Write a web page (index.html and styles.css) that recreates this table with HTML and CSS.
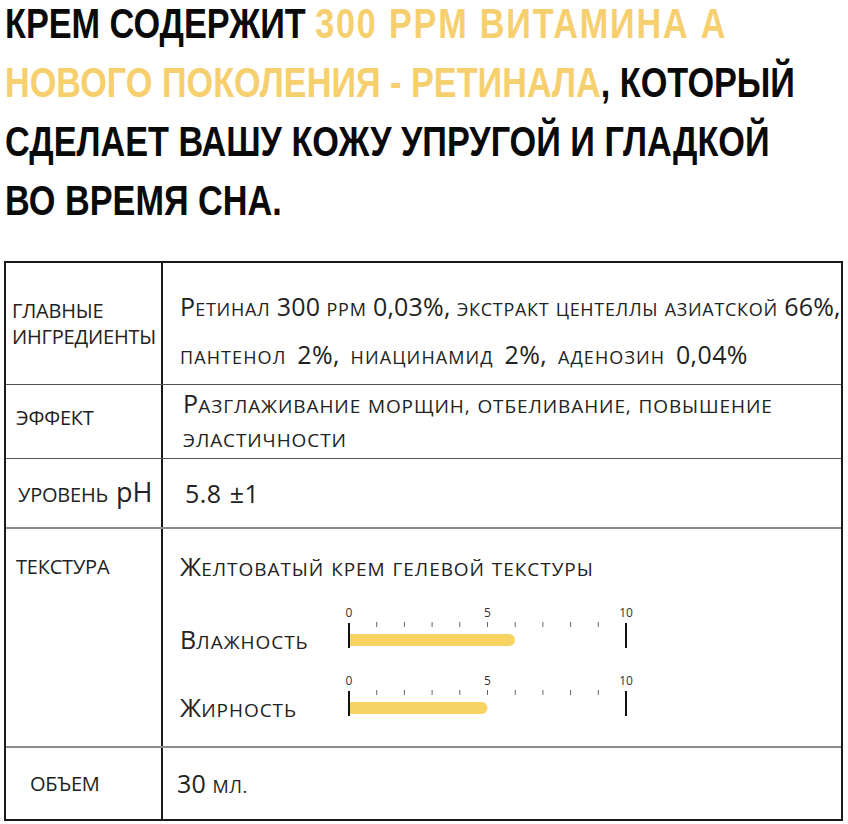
FILE: index.html
```html
<!DOCTYPE html>
<html lang="ru">
<head>
<meta charset="utf-8">
<title>Крем с ретиналом</title>
<link rel="stylesheet" href="styles.css">
</head>
<body>
<div class="head-wrap">
<h1 class="headline">
  <span class="dark">КРЕМ СОДЕРЖИТ </span><span class="accent wide">300 PPM ВИТАМИНА А</span><br>
  <span class="accent">НОВОГО ПОКОЛЕНИЯ - РЕТИНАЛА</span><span class="dark">, КОТОРЫЙ</span><br>
  <span class="dark">СДЕЛАЕТ ВАШУ КОЖУ УПРУГОЙ И ГЛАДКОЙ</span><br>
  <span class="dark">ВО ВРЕМЯ СНА.</span>
</h1>
</div>

<div class="spec">
  <div class="row row-ingr">
    <div class="label label-ingr"><span>ГЛАВНЫЕ<br>ИНГРЕДИЕНТЫ</span></div>
    <div class="value value-ingr"><span><b>Р</b>ЕТИНАЛ <b>300</b> PPM <b>0,03%,</b> ЭКСТРАКТ ЦЕНТЕЛЛЫ АЗИАТСКОЙ <b>66%,</b><br><span class="line2">ПАНТЕНОЛ <b>2%,</b> НИАЦИНАМИД <b>2%,</b> АДЕНОЗИН <b>0,04%</b></span></span></div>
  </div>
  <div class="row row-effect">
    <div class="label label-effect"><span>ЭФФЕКТ</span></div>
    <div class="value value-effect"><span><b>Р</b>АЗГЛАЖИВАНИЕ МОРЩИН, ОТБЕЛИВАНИЕ, ПОВЫШЕНИЕ<br>ЭЛАСТИЧНОСТИ</span></div>
  </div>
  <div class="row row-ph">
    <div class="label label-ph"><span>УРОВЕНЬ <span class="ph">pH</span></span></div>
    <div class="value value-ph"><span><b>5.8 ±1</b></span></div>
  </div>
  <div class="row row-texture">
    <div class="label label-texture"><span>ТЕКСТУРА</span></div>
    <div class="value value-texture">
      <div class="texture-text"><b>Ж</b>ЕЛТОВАТЫЙ КРЕМ ГЕЛЕВОЙ ТЕКСТУРЫ</div>
      <div class="gauge">
        <div class="gauge-name"><b>В</b>ЛАЖНОСТЬ</div>
        <svg class="scale" width="300" height="46" viewBox="0 0 300 46">
          <g class="nums"><text x="9" y="13">0</text><text x="147.5" y="13">5</text><text x="286" y="13">10</text></g>
          <g class="ticks">
            <line x1="36.7" y1="18" x2="36.7" y2="23"/><line x1="64.4" y1="18" x2="64.4" y2="23"/><line x1="92.1" y1="18" x2="92.1" y2="23"/><line x1="119.8" y1="18" x2="119.8" y2="23"/><line x1="147.5" y1="18" x2="147.5" y2="23"/><line x1="175.2" y1="18" x2="175.2" y2="23"/><line x1="202.9" y1="18" x2="202.9" y2="23"/><line x1="230.6" y1="18" x2="230.6" y2="23"/><line x1="258.3" y1="18" x2="258.3" y2="23"/>
          </g>
          <path class="bar" d="M9 30 H169 A6 6 0 0 1 169 42 H9 Z"/>
          <g class="ends"><line x1="9" y1="19" x2="9" y2="44"/><line x1="286" y1="19" x2="286" y2="44"/></g>
        </svg>
      </div>
      <div class="gauge">
        <div class="gauge-name"><b>Ж</b>ИРНОСТЬ</div>
        <svg class="scale" width="300" height="46" viewBox="0 0 300 46">
          <g class="nums"><text x="9" y="13">0</text><text x="147.5" y="13">5</text><text x="286" y="13">10</text></g>
          <g class="ticks">
            <line x1="36.7" y1="18" x2="36.7" y2="23"/><line x1="64.4" y1="18" x2="64.4" y2="23"/><line x1="92.1" y1="18" x2="92.1" y2="23"/><line x1="119.8" y1="18" x2="119.8" y2="23"/><line x1="147.5" y1="18" x2="147.5" y2="23"/><line x1="175.2" y1="18" x2="175.2" y2="23"/><line x1="202.9" y1="18" x2="202.9" y2="23"/><line x1="230.6" y1="18" x2="230.6" y2="23"/><line x1="258.3" y1="18" x2="258.3" y2="23"/>
          </g>
          <path class="bar" d="M9 30 H141.5 A6 6 0 0 1 141.5 42 H9 Z"/>
          <g class="ends"><line x1="9" y1="19" x2="9" y2="44"/><line x1="286" y1="19" x2="286" y2="44"/></g>
        </svg>
      </div>
    </div>
  </div>
  <div class="row row-volume">
    <div class="label label-volume"><span>ОБЪЕМ</span></div>
    <div class="value value-volume"><span><b>30</b> МЛ.</span></div>
  </div>
</div>
</body>
</html>
```

FILE: styles.css
```css
* { box-sizing: border-box; }
html, body { margin: 0; padding: 0; background: #fff; }
body { width: 848px; height: 824px; overflow: hidden; }

.head-wrap {
  height: 230px;
  overflow: hidden;
}
.headline {
  display: inline-block;
  margin: -6px 0 0 5px;
  padding: 0;
  font-family: "Liberation Sans", Arial, sans-serif;
  font-weight: 700;
  font-size: 42px;
  line-height: 59px;
  white-space: nowrap;
  transform: scaleX(0.815);
  transform-origin: 0 0;
}
.dark { color: #0a0a0a; }
.accent { color: #f6cf6e; }
.wide { letter-spacing: 2.2px; }

.spec {
  margin: 31px 0 0 4px;
  width: 839px;
  border: 2px solid #1a1a1a;
  font-family: "Open Sans", sans-serif;
  color: #222;
}
.row {
  display: grid;
  grid-template-columns: 157px 1fr;
}
.label {
  border-right: 2px solid #1a1a1a;
  display: flex;
  align-items: center;
  font-size: 20px;
  letter-spacing: -0.2px;
  line-height: 26px;
  color: #222;
}
.value {
  display: flex;
  align-items: center;
  font-size: 18px;
  letter-spacing: 0.7px;
  word-spacing: 1px;
  color: #222;
  white-space: nowrap;
}
.value b {
  font-weight: 400;
  font-size: 25px;
  letter-spacing: 0.2px;
}
.line2 { word-spacing: 5px; letter-spacing: 1.1px; }
.line2 b { letter-spacing: 0.4px; }

.row-ingr { height: 122px; border-bottom: 1px solid #555; }
.row-effect { height: 74px; border-bottom: 1px solid #555; }
.row-ph { height: 70px; border-bottom: 2px solid #8c8c8c; }
.row-texture { height: 219px; border-bottom: 2px solid #8c8c8c; }
.row-volume { height: 71px; }

.label-ingr { padding-left: 6px; }
.label-effect { padding-left: 10px; padding-bottom: 8px; }
.label-ph { padding-left: 12px; }
.ph { font-size: 27px; letter-spacing: 0; margin-left: 3px; }
.label-texture { padding-left: 10px; align-items: flex-start; padding-top: 25px; }
.label-volume { padding-left: 24px; }

.value-ingr { padding-left: 17px; line-height: 45px; padding-top: 16px; }
.value-effect { padding-left: 20px; line-height: 34px; padding-top: 0; font-size: 19px; letter-spacing: 0.9px; }
.value-ph { padding-left: 22px; }
.value-ph b { letter-spacing: 0.5px; }
.value-texture {
  flex-direction: column;
  align-items: stretch;
  justify-content: flex-start;
  padding-left: 17px;
  padding-top: 22px;
  font-size: 19px;
  letter-spacing: 0.95px;
}
.texture-text { line-height: 30px; }
.gauge {
  display: flex;
  align-items: flex-start;
  height: 68px;
}
.texture-text + .gauge { margin-top: 20px; }
.gauge-name {
  width: 160px;
  padding-top: 20px;
  line-height: 30px;
}
.scale { display: block; }
.scale .nums text {
  font-family: "Open Sans", sans-serif;
  font-size: 12px;
  letter-spacing: 0;
  fill: #333;
  text-anchor: middle;
}
.scale .ticks line { stroke: #666; stroke-width: 1; }
.scale .ends line { stroke: #111; stroke-width: 2; }
.scale .bar { fill: #f6d363; }

.value-volume { padding-left: 14px; padding-bottom: 2px; }
.value-volume b { font-size: 25px; }
```
